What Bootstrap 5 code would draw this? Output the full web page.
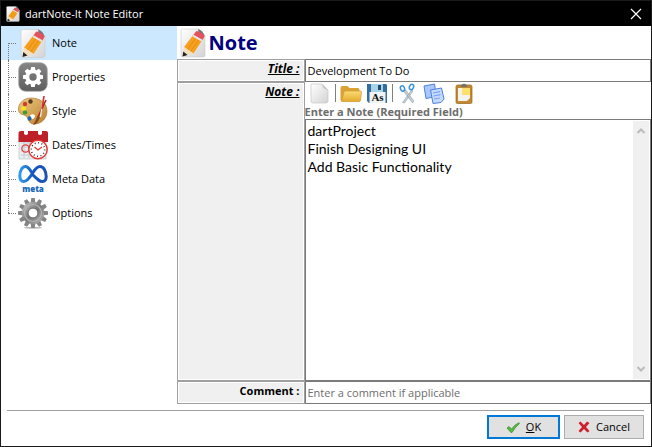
<!DOCTYPE html>
<html lang="en">
<head>
<meta charset="utf-8">
<meta name="viewport" content="width=device-width, initial-scale=1">
<title>dartNote-It Note Editor</title>
<link href="https://cdn.jsdelivr.net/npm/bootstrap@5.3.0/dist/css/bootstrap.min.css" rel="stylesheet">
<style>
  body { font-family: "Segoe UI", "Open Sans", sans-serif; font-size: 11px; line-height: 16px; color: #000; background: #fff; }
  svg { display: block; flex: none; }
  .window { border: 1px solid #1a1a1a; }
  .titlebar { height: 25px; background: #000; color: #fff; padding: 0 9px 0 5px; gap: 5px; }
  .close-btn { background: none; border: 0; padding: 0; color: #fff; }
  .side { width: 27%; max-width: 176px; }
  .side a { height: 34px; padding-left: 17px; gap: 4px; color: #000; position: relative; }
  .side a.active { background: #cce8ff; }
  .side a::before { content: ""; position: absolute; left: 7px; top: 0; bottom: 0; border-left: 1px dotted #777; }
  .side a:first-child::before { top: 17px; }
  .side a:last-child::before { bottom: 17px; }
  .side a::after { content: ""; position: absolute; left: 7px; top: 17px; width: 8px; border-top: 1px dotted #777; }
  .head { height: 33px; gap: 3px; padding-left: 3px; }
  .head h1 { font-size: 20px; line-height: 30px; font-weight: 700; color: #000080; }
  .field-label { width: 128px; flex: none; background: #f0f0f0; border: 1px solid #a0a0a0; box-shadow: inset 0 0 0 1px #fff; text-align: right; padding: 1px 4px 0 0; font-weight: 700; }
  .hot { font-style: italic; font-size: 12px; text-decoration: underline; }
  .line-row { height: 23px; }
  .line-row input { border: 1px solid #7a7a7a; padding: 0 2px; min-width: 0; outline: 0; }
  .line-row input::placeholder { color: #6d6d6d; opacity: 1; }
  .tools { height: 22px; padding-left: 4px; gap: 4px; }
  .tools button { background: none; border: 0; padding: 0; width: 22px; height: 21px; display: flex; justify-content: center; align-items: center; }
  .rule { width: 1px; height: 18px; background: #808080; }
  .hint { font-weight: 700; color: #6d6d6d; line-height: 15px; }
  .memo { border: 1px solid #7a7a7a; }
  .memo textarea { border: 0; outline: 0; resize: none; padding: 2px; font-family: "Comic Sans MS", Lato, sans-serif; font-size: 14px; line-height: 18px; min-width: 0; overflow: hidden; }
  .track { width: 16px; background: #f0f0f0; padding: 7px 0; margin: 1px 1px 1px 0; }
  .foot { margin: 6px 7px 0 6px; border-top: 1px solid #a0a0a0; padding: 4px 0 7px; gap: 4px; }
  .foot button { height: 24px; background: #e1e1e1; border: 1px solid #adadad; padding: 0; gap: 6px; width: 80px; color: #000; }
  .foot .main-btn { border: 2px solid #0078d7; width: 73px; }
</style>
<script src="https://cdn.jsdelivr.net/npm/bootstrap@5.3.0/dist/js/bootstrap.bundle.min.js"></script>
</head>
<body>
<svg width="0" height="0" class="position-absolute" aria-hidden="true">
  <defs>
    <linearGradient id="paper" x1="0" y1="0" x2="1" y2="1"><stop offset="0" stop-color="#fff"/><stop offset="1" stop-color="#d3d3d5"/></linearGradient>
    <linearGradient id="tile" x1="0" y1="0" x2="0" y2="1"><stop offset="0" stop-color="#858585"/><stop offset="1" stop-color="#5e5e5e"/></linearGradient>
    <linearGradient id="steel" x1="0" y1="0" x2="1" y2="1"><stop offset="0" stop-color="#b5b5b5"/><stop offset=".5" stop-color="#777"/><stop offset="1" stop-color="#a5a5a5"/></linearGradient>
    <linearGradient id="metablue"><stop offset="0" stop-color="#2f9bf0"/><stop offset=".5" stop-color="#1557bd"/><stop offset="1" stop-color="#1d4fb8"/></linearGradient>
    <linearGradient id="wood" x1="0" y1="0" x2="1" y2="1"><stop offset="0" stop-color="#eecb83"/><stop offset="1" stop-color="#b9802c"/></linearGradient>
    <linearGradient id="gold" x1="0" y1="0" x2="0" y2="1"><stop offset="0" stop-color="#fbdc75"/><stop offset="1" stop-color="#e4aa2c"/></linearGradient>
    <symbol id="note" viewBox="0 0 30 30">
      <path d="M3 2.500Q3 1 4.500 1H21l6 7V27q0 2-2 2H5q-2 0-2-2Z" fill="url(#paper)" stroke="#c9c9cb" stroke-width=".6"/>
      <path d="M20 1q5 1 7 8-2-3-6-3Z" fill="#777"/>
      <path d="m16 6 9 5-9.500 14.500L6 19Z" fill="#f6a01e"/>
      <path d="m19 8.500-9.500 13M22 10.500l-9.500 13" stroke="#df8b14" stroke-width=".9" fill="none"/>
      <path d="m15.500 7 2-3q1-1.500 3-.5l5 3q1.500 1 .5 3l-2 3Z" fill="#e4535c"/>
      <path d="m14.500 8.500 9 5 1-1.700-9-5Z" fill="#e6e6e6"/>
      <path d="m6 19 9.500 6.500L4.500 28.500Z" fill="#f5dfbb"/><path d="m5.300 23.500 4.200 3.600-5 1.400Z" fill="#222"/>
    </symbol>
  </defs>
</svg>
<div class="window d-flex flex-column min-vh-100">
  <header class="titlebar d-flex align-items-center">
    <svg width="14" height="16" viewBox="2 0 26 30"><use href="#note" width="30" height="30"/></svg>
    <span class="flex-grow-1">dartNote-It Note Editor</span>
    <button class="close-btn" type="button" aria-label="Close"><svg width="12" height="12" viewBox="0 0 12 12"><path d="m1 1 10 10M11 1 1 11" stroke="#fff" stroke-width="1.200"/></svg></button>
  </header>
  <div class="d-flex flex-grow-1">
    <nav class="side flex-shrink-0 d-flex flex-column">
      <a href="#" class="active d-flex align-items-center text-decoration-none"><svg width="30" height="31"><use href="#note"/></svg>Note</a>
      <a href="#" class="d-flex align-items-center text-decoration-none">
        <svg width="30" height="30" viewBox="-15 -15 30 30"><rect x="-14.300" y="-14.300" width="28.600" height="28.600" rx="7" fill="url(#tile)" stroke="#aaa" stroke-width=".8"/><g fill="#fff"><path id="ct" d="M-1.800-10h3.600l.8 4h-5.200Zm0 20h3.600l.8-4h-5.200Z"/><use href="#ct" transform="rotate(45)"/><use href="#ct" transform="rotate(90)"/><use href="#ct" transform="rotate(135)"/></g><circle r="5.600" fill="none" stroke="#fff" stroke-width="3.800"/></svg>Properties</a>
      <a href="#" class="d-flex align-items-center text-decoration-none">
        <svg width="30" height="30" viewBox="0 0 30 30"><path d="M13 2C5 2 0 8 .5 14 1 19 5 18 8 20s2 8 8 8c8 0 13-6 13-13C29 7 22 2 13 2Z" fill="url(#wood)" stroke="#a06c22" stroke-width=".6"/><path d="M12 19q3-1.500 4.500 0t-1 3.500T12 19Z" fill="#fff"/><circle cx="7" cy="8" r="2.200" fill="#d23b24"/><circle cx="12.500" cy="5.500" r="2.200" fill="#553a22"/><ellipse cx="5.500" cy="12.500" rx="2.600" ry="2" fill="#f7e51e"/><ellipse cx="7" cy="16.500" rx="2.300" ry="1.900" fill="#3c9d2e"/><ellipse cx="11.500" cy="22.500" rx="2" ry="2.200" fill="#1d66b4"/><path d="m28 4-9 19" stroke="#b02318" stroke-width="1.600"/><path d="m20 20-5 9q5-1 7-8Z" fill="#8a4a1e"/><path d="m25.500 0-3 21" stroke="#e8e8e8" stroke-width="1.400"/><path d="m26 0-2 13" stroke="#c33" stroke-width="1.600"/></svg>Style</a>
      <a href="#" class="d-flex align-items-center text-decoration-none">
        <svg width="30" height="30" viewBox="0 0 30 30"><path d="M1 9h27v20H1Z" fill="#e9edef" stroke="#bcc3c7" stroke-width=".7"/><path d="M3 13h20M3 17h20M3 21h20M3 25h20M6 11v17M11 11v17" stroke="#bcc6cb" stroke-width=".8"/><path d="M.5 3Q.5 1 3 1h25q2 0 2 2v9H.500Z" fill="#bd2026"/><path d="M6 0h4v4q-2 2-4 0Zm14 0h4v4q-2 2-4 0Z" fill="#fff"/><circle cx="7.500" cy="18.500" r="3.700" fill="none" stroke="#e23c3c" stroke-width="1.200"/><circle cx="20" cy="19.500" r="9.200" fill="#fff" stroke="#e53935" stroke-width="1.500"/><circle cx="20" cy="19.500" r="6.700" fill="none" stroke="#222" stroke-width="1.500" stroke-dasharray=".9 2.600"/><path d="m16.500 17 3.500 3 4-3" fill="none" stroke="#e53935" stroke-width="1.200"/></svg>Dates/Times</a>
      <a href="#" class="d-flex align-items-center text-decoration-none">
        <svg width="30" height="30" viewBox="0 0 30 30"><path d="M15 11C12 5 10 2.500 7.500 2.500 4 2.500 1.800 7 1.800 12c0 3.500 1.400 5.500 4 5.500 3 0 5.500-3 9.200-9 2.500-4 4.500-6 7-6 3.500 0 6.200 4.500 6.200 10 0 3-1.200 5-3.700 5-3 0-5-2-9.500-6.500Z" fill="none" stroke="url(#metablue)" stroke-width="3"/><text x="15" y="28" text-anchor="middle" font-family="Open Sans, sans-serif" font-weight="800" font-size="8" fill="#1667b8">meta</text></svg>Meta Data</a>
      <a href="#" class="d-flex align-items-center text-decoration-none">
        <svg width="30" height="31" viewBox="-15 -15 30 31"><ellipse cy="14.800" rx="9" ry="1" fill="#bbb"/><g fill="#858585"><g id="gq"><path id="gt" d="M-1.700-15h3.400l.9 6h-5.200ZM-1.700 15h3.400l.9-6h-5.200Z"/><use href="#gt" transform="rotate(30)"/><use href="#gt" transform="rotate(60)"/></g><use href="#gq" transform="rotate(90)"/></g><circle r="7.800" fill="none" stroke="url(#steel)" stroke-width="6.400"/><circle r="8.500" fill="none" stroke="#b4b4b4" stroke-width="1.200"/><circle r="5" fill="none" stroke="#666" stroke-width=".8"/></svg>Options</a>
    </nav>
    <main class="flex-grow-1 d-flex flex-column">
      <div class="head d-flex align-items-center"><svg width="26" height="30" viewBox="2 0 26 30"><use href="#note" width="30" height="30"/></svg><h1 class="m-0">Note</h1></div>
      <div class="line-row d-flex"><label for="t" class="field-label hot">Title :</label><input id="t" type="text" class="flex-grow-1" value="Development To Do"></div>
      <div class="d-flex flex-grow-1">
        <label for="n" class="field-label hot">Note :</label>
        <div class="flex-grow-1 d-flex flex-column">
          <div class="tools d-flex align-items-center">
            <button type="button" aria-label="New"><svg width="20" height="21" viewBox="0 0 20 21"><path d="M1 1h11l6 6v11q0 2-2 2H3q-2 0-2-2Z" fill="url(#paper)" stroke="#c6c6c9" stroke-width=".7"/><path d="M12 1q0 5 6 6Z" fill="#c5c6c9"/></svg></button>
            <span class="rule"></span>
            <button type="button" aria-label="Open"><svg width="22" height="21" viewBox="0 0 22 21"><path d="M.5 5q0-2 2-2h5l2 2h8.500q1.500 0 1.500 2v11H2q-1.500 0-1.500-1Z" fill="#d9a435"/><path d="M1.500 18.500 4 9q.3-1 1.500-1h15q1 0 1 1l-1 8.500q-.2 1-1.500 1Z" fill="url(#gold)" stroke="#d29a2c" stroke-width=".7"/></svg></button>
            <button type="button" aria-label="Save as"><svg width="22" height="21" viewBox="0 0 22 21"><path d="M1 1h19l1 1v18H3l-2-2Z" fill="#336f9e"/><path d="M5 1h12v8H5Z" fill="#a9d3e8"/><path d="M12 2h3v5h-3Z" fill="#214c70"/><rect x="3.500" y="9" width="16" height="11" fill="#f0f4f5"/><text x="11.500" y="18" text-anchor="middle" font-family="Liberation Serif, serif" font-weight="700" font-size="11" fill="#111">As</text></svg></button>
            <span class="rule"></span>
            <button type="button" aria-label="Cut"><svg width="18" height="21" viewBox="0 0 18 21"><path d="m13.500 20-9-12 .5-1.500 2 1L15 18Zm-10-.500 9-12.500 1.500 1-8.500 12Z" fill="#c3ced5" stroke="#8798a5" stroke-width=".5"/><ellipse cx="3.500" cy="5.500" rx="2" ry="2.700" transform="rotate(-25 3.500 5.500)" fill="none" stroke="#3a94e0" stroke-width="1.500"/><ellipse cx="12.500" cy="4" rx="2" ry="2.700" transform="rotate(25 12.500 4)" fill="none" stroke="#3a94e0" stroke-width="1.500"/></svg></button>
            <button type="button" aria-label="Copy"><svg width="22" height="21" viewBox="0 0 22 21"><path d="m1 3 10.500-2 2 12.500L3 15.500Z" fill="#a9c8fb" stroke="#4f7fdf"/><path d="m7.500 7 11-2 2.500 11-3 3.500-8 1Z" fill="#c4dafe" stroke="#4f7fdf"/><path d="m10 10 7-1.300M10.500 13l7-1.300M11 16l6-1" stroke="#79a1ee" stroke-width="1.200"/></svg></button>
            <button type="button" class="ms-1" aria-label="Paste"><svg width="18" height="21" viewBox="0 0 18 21"><rect x="1" y="2" width="16" height="18.500" rx="1.500" fill="#c18a32" stroke="#976718" stroke-width=".7"/><path d="M3 5h12v10l-3 3H3Z" fill="#f4f2ec"/><path d="M5.500 4Q6 1 9 .8q3 .2 3.500 3.200Z" fill="#77736b"/><path d="M7 5h8v7H7Z" fill="#ffe06c"/></svg></button>
          </div>
          <label for="n" class="hint">Enter a Note (Required Field)</label>
          <div class="memo d-flex flex-grow-1">
            <textarea id="n" class="flex-grow-1" spellcheck="false">dartProject
Finish Designing UI
Add Basic Functionality</textarea>
            <div class="track d-flex flex-column justify-content-between align-items-center" aria-hidden="true">
              <svg width="8" height="6" viewBox="0 0 8 6"><path d="m.5 5 3.500-3.500L7.500 5" fill="none" stroke="#bbb" stroke-width="2"/></svg>
              <svg width="8" height="6" viewBox="0 0 8 6"><path d="m.5 1 3.500 3.500L7.500 1" fill="none" stroke="#bbb" stroke-width="2"/></svg>
            </div>
          </div>
        </div>
      </div>
      <div class="line-row d-flex"><label for="c" class="field-label">Comment :</label><input id="c" type="text" class="flex-grow-1" placeholder="Enter a comment if applicable"></div>
    </main>
  </div>
  <footer class="foot d-flex justify-content-end">
    <button type="button" class="main-btn d-flex align-items-center justify-content-center"><svg width="14" height="11" viewBox="0 0 14 11"><path d="m1 6 2-1.500 2.500 2.500Q8.500 2.500 13 .7l.5.8Q9 5.500 6 10.500H5Z" fill="#58b947" stroke="#348a2a" stroke-width=".7"/></svg><span><u>O</u>K</span></button>
    <button type="button" class="d-flex align-items-center justify-content-center"><svg width="12" height="12" viewBox="0 0 12 12"><path d="m.5 2 2-1.500L6 4l3-3.500L11.500 2 8 6l3.500 4-2 1.500L6 8l-3.500 3.500L.500 10 4 6Z" fill="#cf1f2a"/></svg>Cancel</button>
  </footer>
</div>
</body>
</html>
